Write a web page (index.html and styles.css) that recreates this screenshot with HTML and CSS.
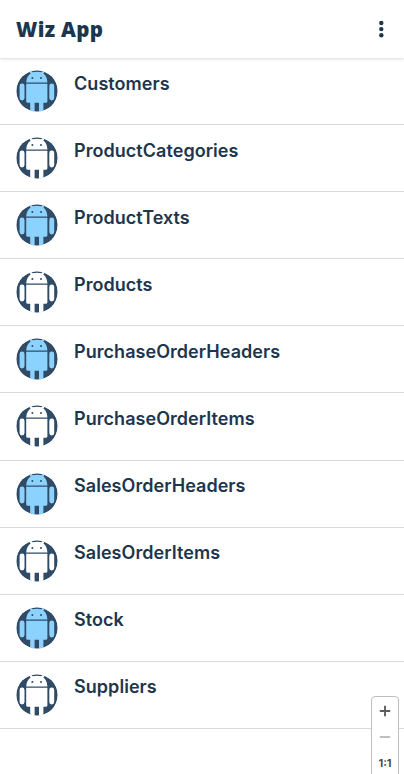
FILE: index.html
```
<!DOCTYPE html>
<html lang="en">
<head>
<meta charset="utf-8">
<title>Wiz App</title>
<link rel="stylesheet" href="styles.css">
</head>
<body>
<svg class="defs" aria-hidden="true">
  <clipPath id="disc"><circle cx="21" cy="21" r="20.7"/></clipPath>
  <symbol id="android" viewBox="0 0 42 42">
    <g clip-path="url(#disc)">
      <circle cx="21" cy="21" r="20.7" fill="#2f4b66"/>
      <g fill="currentColor">
        <path d="M10.2 12.4C10.4 8 12.2 5.1 14.6 3.5L12.1 0L14.2 -1L16.7 2.3C19.3 1.5 22.7 1.5 25.3 2.3L27.8 -1L29.9 0L27.4 3.5C29.8 5.1 31.2 8 31.4 12.4Z"/>
        <path d="M10.2 13.8H31.4V31.2Q31.4 32.8 29.8 32.8H27.4V42H23V32.8H18.6V42H14.2V32.8H11.8Q10.2 32.8 10.2 31.2Z"/>
        <rect x="3.6" y="13.6" width="4.9" height="16.8" rx="2.4"/>
        <rect x="33.3" y="13.6" width="4.9" height="16.8" rx="2.4"/>
      </g>
      <circle cx="16.4" cy="8" r="1" fill="#2f4b66"/>
      <circle cx="25" cy="8" r="1" fill="#2f4b66"/>
    </g>
  </symbol>
</svg>
<header class="bar">
  <h1>Wiz App</h1>
  <svg class="more" viewBox="0 0 6 18"><circle cx="3.3" cy="3" r="2.2"/><circle cx="3.3" cy="9.1" r="2.2"/><circle cx="3.3" cy="15.2" r="2.2"/></svg>
</header>
<ul class="list">
  <li><svg class="icon"><use href="#android"/></svg><span>Customers</span></li>
  <li><svg class="icon"><use href="#android"/></svg><span>ProductCategories</span></li>
  <li><svg class="icon"><use href="#android"/></svg><span>ProductTexts</span></li>
  <li><svg class="icon"><use href="#android"/></svg><span>Products</span></li>
  <li><svg class="icon"><use href="#android"/></svg><span>PurchaseOrderHeaders</span></li>
  <li><svg class="icon"><use href="#android"/></svg><span>PurchaseOrderItems</span></li>
  <li><svg class="icon"><use href="#android"/></svg><span>SalesOrderHeaders</span></li>
  <li><svg class="icon"><use href="#android"/></svg><span>SalesOrderItems</span></li>
  <li><svg class="icon"><use href="#android"/></svg><span>Stock</span></li>
  <li><svg class="icon"><use href="#android"/></svg><span>Suppliers</span></li>
</ul>
<div class="zoom">
  <svg viewBox="0 0 12 12"><path d="M.8 6H11.2M6 .8V11.2" stroke="#5e5e5e" stroke-width="1.9"/></svg>
  <svg viewBox="0 0 12 12"><path d="M.8 6H11.2" stroke="#bcbcbc" stroke-width="1.9"/></svg>
  <span>1:1</span>
</div>
</body>
</html>
```
FILE: styles.css
```
* { box-sizing: border-box; }
body {
  margin: 0;
  height: 774px;
  overflow: hidden;
  position: relative;
  background: #fff;
  color: #1d364e;
  font-family: Inter, "Open Sans", sans-serif;
}
.defs { position: absolute; width: 0; height: 0; }
.bar {
  height: 58px;
  padding: 0 20px 0 16px;
  display: flex;
  align-items: center;
  justify-content: space-between;
  box-shadow: 0 1px 3px rgba(0, 0, 0, .15);
}
h1 { margin: 0; font: 900 20.5px/28px "Noto Sans", sans-serif; letter-spacing: .35px; }
.more { width: 6px; height: 18px; fill: #1d364e; }
.list { margin: 0; padding: 0; list-style: none; }
.list li {
  height: 67.1px;
  padding: 12px 16px 0;
  display: flex;
  align-items: flex-start;
  gap: 16px;
  border-bottom: 1px solid #d5dbde;
}
.icon { width: 42px; height: 42px; flex: none; color: #fff; }
.list li:nth-child(odd) .icon { color: #8cd2ff; }
.list span { margin-top: .65px; font-size: 18px; line-height: 26px; font-weight: 600; letter-spacing: .05px; }
.zoom {
  position: absolute;
  left: 371px;
  top: 696px;
  width: 28px;
  height: 90px;
  padding-top: 8px;
  display: flex;
  flex-direction: column;
  align-items: center;
  gap: 14px;
  background: #fff;
  border: 1px solid #bfbfbf;
  border-radius: 4px;
}
.zoom svg { width: 12px; height: 12px; flex: none; }
.zoom span { font: 700 11px/12px Inter, sans-serif; color: #4d4d4d; }
```
